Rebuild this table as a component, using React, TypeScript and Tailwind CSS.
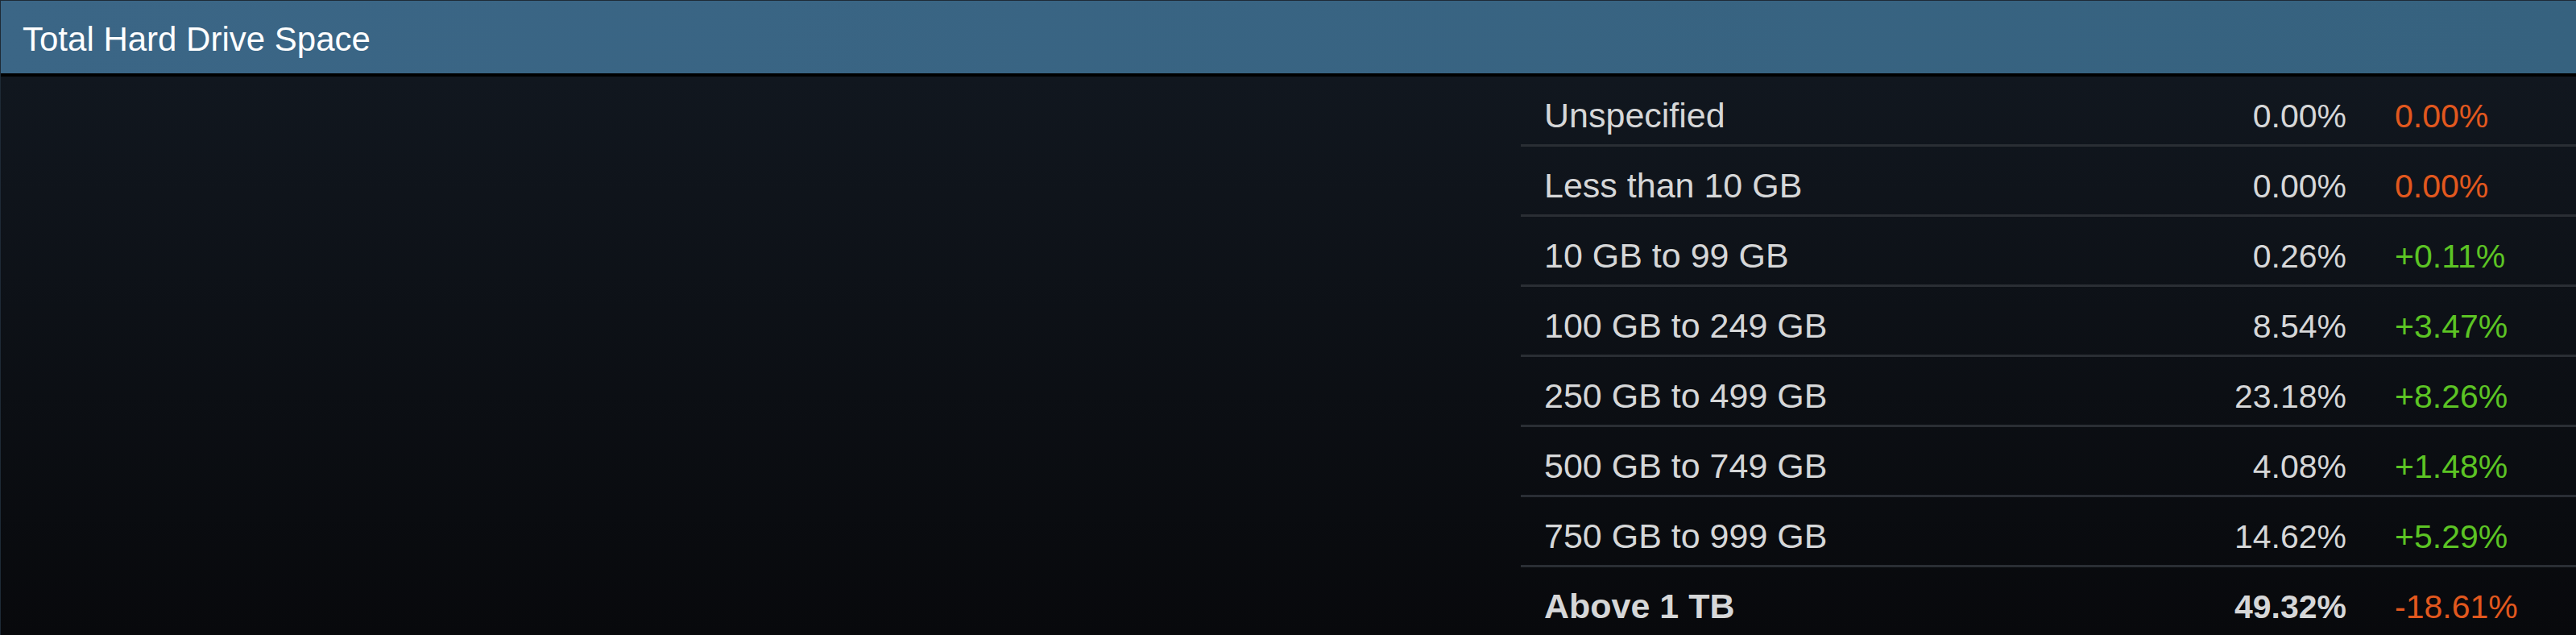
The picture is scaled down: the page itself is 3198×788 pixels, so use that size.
import React from 'react';

type Row = { label: string; pct: string; change: string; bold?: boolean };

const rows: Row[] = [
  { label: 'Unspecified', pct: '0.00%', change: '0.00%' },
  { label: 'Less than 10 GB', pct: '0.00%', change: '0.00%' },
  { label: '10 GB to 99 GB', pct: '0.26%', change: '+0.11%' },
  { label: '100 GB to 249 GB', pct: '8.54%', change: '+3.47%' },
  { label: '250 GB to 499 GB', pct: '23.18%', change: '+8.26%' },
  { label: '500 GB to 749 GB', pct: '4.08%', change: '+1.48%' },
  { label: '750 GB to 999 GB', pct: '14.62%', change: '+5.29%' },
  { label: 'Above 1 TB', pct: '49.32%', change: '-18.61%', bold: true },
];

// orange for zero / negative, green for gains
function changeColor(v: string) {
  return v.startsWith('+') ? 'text-[#5cc424]' : 'text-[#e2581e]';
}

export default function App() {
  return (
    <div className="w-[3198px] h-[788px] overflow-hidden flex flex-col border-l border-t border-[#1e2a36] font-['Liberation_Sans',Arial,sans-serif]">
      <div className="h-[94px] shrink-0 flex items-center pl-[27px] pt-[5px] bg-gradient-to-r from-[#3b6686] to-[#36627f] border-b-4 border-black">
        <h2 className="text-[42px] text-white leading-none">Total Hard Drive Space</h2>
      </div>

      <div className="flex-1 flex bg-gradient-to-b from-[#11171f] to-[#08090c]">
        {/* chart area, empty in this capture */}
        <div className="flex-1" />

        <div className="w-[1310px] shrink-0">
          {rows.map((r) => (
            <div
              key={r.label}
              className={`flex items-baseline h-[87px] pt-[27px] border-b-[3px] border-[#2a2e34] leading-none text-[41px] ${r.bold ? 'font-bold' : ''}`}
            >
              <div className="flex-1 pl-[29px] text-[#d6d7d8] text-[43px]">{r.label}</div>
              <div className="w-[200px] text-right text-[#d6d7d8]">{r.pct}</div>
              <div className={`w-[285px] pl-[60px] font-normal ${changeColor(r.change)}`}>{r.change}</div>
            </div>
          ))}
        </div>
      </div>
    </div>
  );
}
